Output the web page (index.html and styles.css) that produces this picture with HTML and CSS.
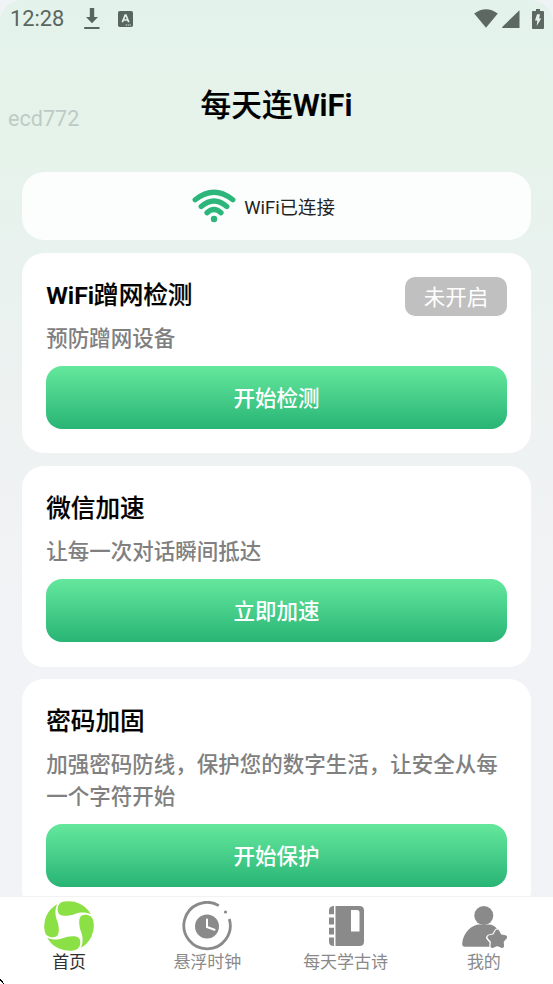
FILE: index.html
```html
<!DOCTYPE html>
<html lang="zh-CN">
<head>
<meta charset="utf-8">
<title>每天连WiFi</title>
<link rel="stylesheet" href="styles.css">
</head>
<body>
<div class="screen">
  <header class="status">
    <span class="clock">12:28</span>
    <svg class="download" width="16" height="22" viewBox="0 0 16 22"><path d="M5.8 0h4.400v9H14l-6 6.200L2 9h3.800zM.2 19h15.300v2H.2z" fill="#596560"/></svg>
    <svg class="app" width="15" height="16" viewBox="0 0 15 16"><rect width="15" height="16" rx="1.800" fill="#596560"/><path d="M4.300 11.200 7.200 4h.7l2.900 7.200M5.300 9h4.500" fill="none" stroke="#e5f2ea" stroke-width="1.700"/><path d="M7.700 14h1.200m.8 0h1.200m.8 0h1.200" stroke="#e5f2ea" stroke-width="1.200"/></svg>
    <span class="spacer"></span>
    <svg class="wifi" width="24" height="19" viewBox="0 0 24 19"><path d="M.2 4.500Q12-4 23.800 4.500L12 18.800z" fill="#5d6863"/></svg>
    <svg class="signal" width="18" height="18" viewBox="0 0 18 18"><path d="M17.500.2V18H.2v-1z" fill="#5d6863"/></svg>
    <svg class="battery" width="12" height="20" viewBox="0 0 12 20"><path d="M4 0h4v2h3q1 0 1 1v16q0 1-1 1H1q-1 0-1-1V3q0-1 1-1h3z" fill="#5d6863"/><path d="M5 5.200h3L7.200 9.500h2L4.700 17l.6-5.400H3z" fill="#e5f2ea"/></svg>
  </header>
  <div class="heading"><span class="user">ecd772</span><h1>每天连<b>WiFi</b></h1></div>
  <main>
    <section class="connection">
      <svg width="44" height="34" viewBox="0 0 44 34"><g fill="none" stroke="#2cb679" stroke-width="5.300" stroke-linecap="round"><path d="M3.200 10.800Q22-4.200 40.800 10.800"/><path d="M9.200 17.500Q22 6.500 34.800 17.500"/><path d="M15 23.800Q22 17.400 29 23.800"/></g><circle cx="22" cy="30" r="3.200" fill="#2cb679"/></svg>
      <span>WiFi已连接</span>
    </section>
    <section class="card">
      <div class="card-head"><h2><b>WiFi</b>蹭网检测</h2><span class="badge">未开启</span></div>
      <p>预防蹭网设备</p>
      <button>开始检测</button>
    </section>
    <section class="card">
      <div class="card-head"><h2>微信加速</h2></div>
      <p>让每一次对话瞬间抵达</p>
      <button>立即加速</button>
    </section>
    <section class="card">
      <div class="card-head"><h2>密码加固</h2></div>
      <p>加强密码防线，保护您的数字生活，让安全从每一个字符开始</p>
      <button>开始保护</button>
    </section>
  </main>
  <nav>
    <a class="tab active">
      <svg width="50" height="50" viewBox="0 0 50 50"><g fill="#8be045"><path id="leaf" d="M13.700 9C13.700 4 16 1.200 20.500.6A24.800 24.800 0 0 1 46.800 13.200C42 10.800 36 11 31.500 12.700C27 14.500 22 15.300 18 14.500C15 13.700 13.700 12 13.700 9z"/><use href="#leaf" transform="rotate(90 25 25)"/><use href="#leaf" transform="rotate(180 25 25)"/><use href="#leaf" transform="rotate(270 25 25)"/></g></svg>
      <span>首页</span>
    </a>
    <a class="tab">
      <svg width="50" height="50" viewBox="0 0 50 50"><path d="M36.800 4.600A23.200 23.200 0 1 0 47.300 18" fill="none" stroke="#8a8a8a" stroke-width="2.800"/><circle cx="43.500" cy="11" r="1.600" fill="#8a8a8a"/><circle cx="25" cy="25.500" r="12" fill="#8a8a8a"/><path d="M25 18.500V26l7.500 2.800" fill="none" stroke="#fff" stroke-width="2" stroke-linecap="round"/></svg>
      <span>悬浮时钟</span>
    </a>
    <a class="tab">
      <svg width="50" height="50" viewBox="0 0 50 50"><path d="M14.500 5H38.500q4.500 0 4.500 4.500v31Q43 45 38.500 45H14.500zM8 13.300V9.500Q8 5 13 5v8.300zM8 16.500h5v7H8zM8 26.700h5v6.800H8zM8 36.500h5V45q-5 0-5-4.500z" fill="#8a8a8a"/><path d="M30 9h6q2.500 0 2.500 2.500V30.500H30z" fill="#fff"/></svg>
      <span>每天学古诗</span>
    </a>
    <a class="tab">
      <svg width="50" height="50" viewBox="0 0 50 50"><circle cx="24.800" cy="14.500" r="9.500" fill="#8a8a8a"/><path d="M3.200 43C3.500 33 12 23.500 20.500 23.500h9C33.500 23.500 36 25 38 28V45.700H5.700Q3.200 45.700 3.200 43z" fill="#8a8a8a"/><path d="m38.300 31 2.600 4.500 5.200 1.100-3.500 4 .5 4.200-4.800-1.600-4.800 1.600.5-4.200-3.500-4 5.200-1.100z" fill="#fff" stroke="#fff" stroke-width="6.500" stroke-linejoin="round"/><path d="m38.300 30.500 2.600 4.700 5.200 1.100-3.500 4 .5 4.700-4.800-2-4.800 2 .5-4.700-3.500-4 5.200-1.100z" fill="#8a8a8a" stroke="#8a8a8a" stroke-width="4" stroke-linejoin="round"/></svg>
      <span>我的</span>
    </a>
  </nav>
  <svg class="corner" width="4" height="5" viewBox="0 0 4 5"><path d="M0 0h1v1h1v1h1v2h1v1H3V4H2V3H1V2H0z"/></svg>
</div>
</body>
</html>
```
FILE: styles.css
```css
* { box-sizing: border-box; }
body { margin: 0; background: #f0f3f5; font-family: Roboto, "Noto Sans CJK SC", sans-serif; }
.screen { position: relative; height: 984px; overflow: hidden; display: flex; flex-direction: column; border-radius: 22px 22px 0 0; background: linear-gradient(#e3f2ea 0, #e6f3eb 160px, #e9f2ef 260px, #eff2f2 460px, #f2f3f6 640px); }
.status { height: 38px; flex: none; display: flex; align-items: center; padding: 0 9px 1px 10px; }
.clock { width: 74px; font-size: 21.800px; color: #596560; }
.app { margin-left: 18px; }
.spacer { flex: 1; }
.wifi { margin-right: 4px; }
.signal { margin-right: 12px; }
.heading { height: 134px; flex: none; display: grid; grid-template-columns: 1fr auto 1fr; align-items: center; }
.user { padding: 27px 0 0 8px; font-size: 21.600px; color: #becbc4; }
h1 { margin: 0; padding-top: 1px; font-size: 30.700px; line-height: 44px; font-weight: 500; -webkit-text-stroke: .2px #000; }
b { font-weight: 600; }
main { flex: 1; min-height: 0; overflow: hidden; padding: 0 21.700px; display: flex; flex-direction: column; gap: 12.600px; }
.connection { flex: none; height: 68px; display: flex; justify-content: center; align-items: center; gap: 8px; padding-right: 26px; border-radius: 22px; background: rgba(255,255,255,.86); font-size: 18.400px; color: #222; }
.card { flex: none; padding: 24.500px; border-radius: 22px; background: #fff; }
.card-head { height: 39px; display: flex; justify-content: space-between; align-items: center; }
h2 { margin: 0; padding-bottom: 1px; font-size: 24.600px; line-height: 36px; font-weight: 500; -webkit-text-stroke: .2px #000; }
.badge { width: 101.500px; height: 39px; border-radius: 10px; background: #c0c0c0; color: #fff; font-size: 21.500px; line-height: 41px; text-align: center; }
.card p { margin: 6.800px 0 11.100px; font-size: 21.500px; line-height: 32px; font-weight: 500; color: #808080; }
.card + .card { margin-top: -.4px; }
button { display: block; width: 100%; height: 63px; padding: 0 0 2px; border: 0; border-radius: 16px; background: linear-gradient(#65e89d, #28b475); color: #fff; font: 500 21.500px Roboto, "Noto Sans CJK SC", sans-serif; }
nav { flex: none; height: 88px; display: flex; background: #fff; border-top: 1px solid #f2f2f2; }
.tab { flex: 1; display: flex; flex-direction: column; align-items: center; padding-top: 4px; color: #8a8a8a; font-size: 17px; line-height: 23px; }
.active { color: #303030; }
.corner { position: absolute; left: 0; bottom: 0; }
```
